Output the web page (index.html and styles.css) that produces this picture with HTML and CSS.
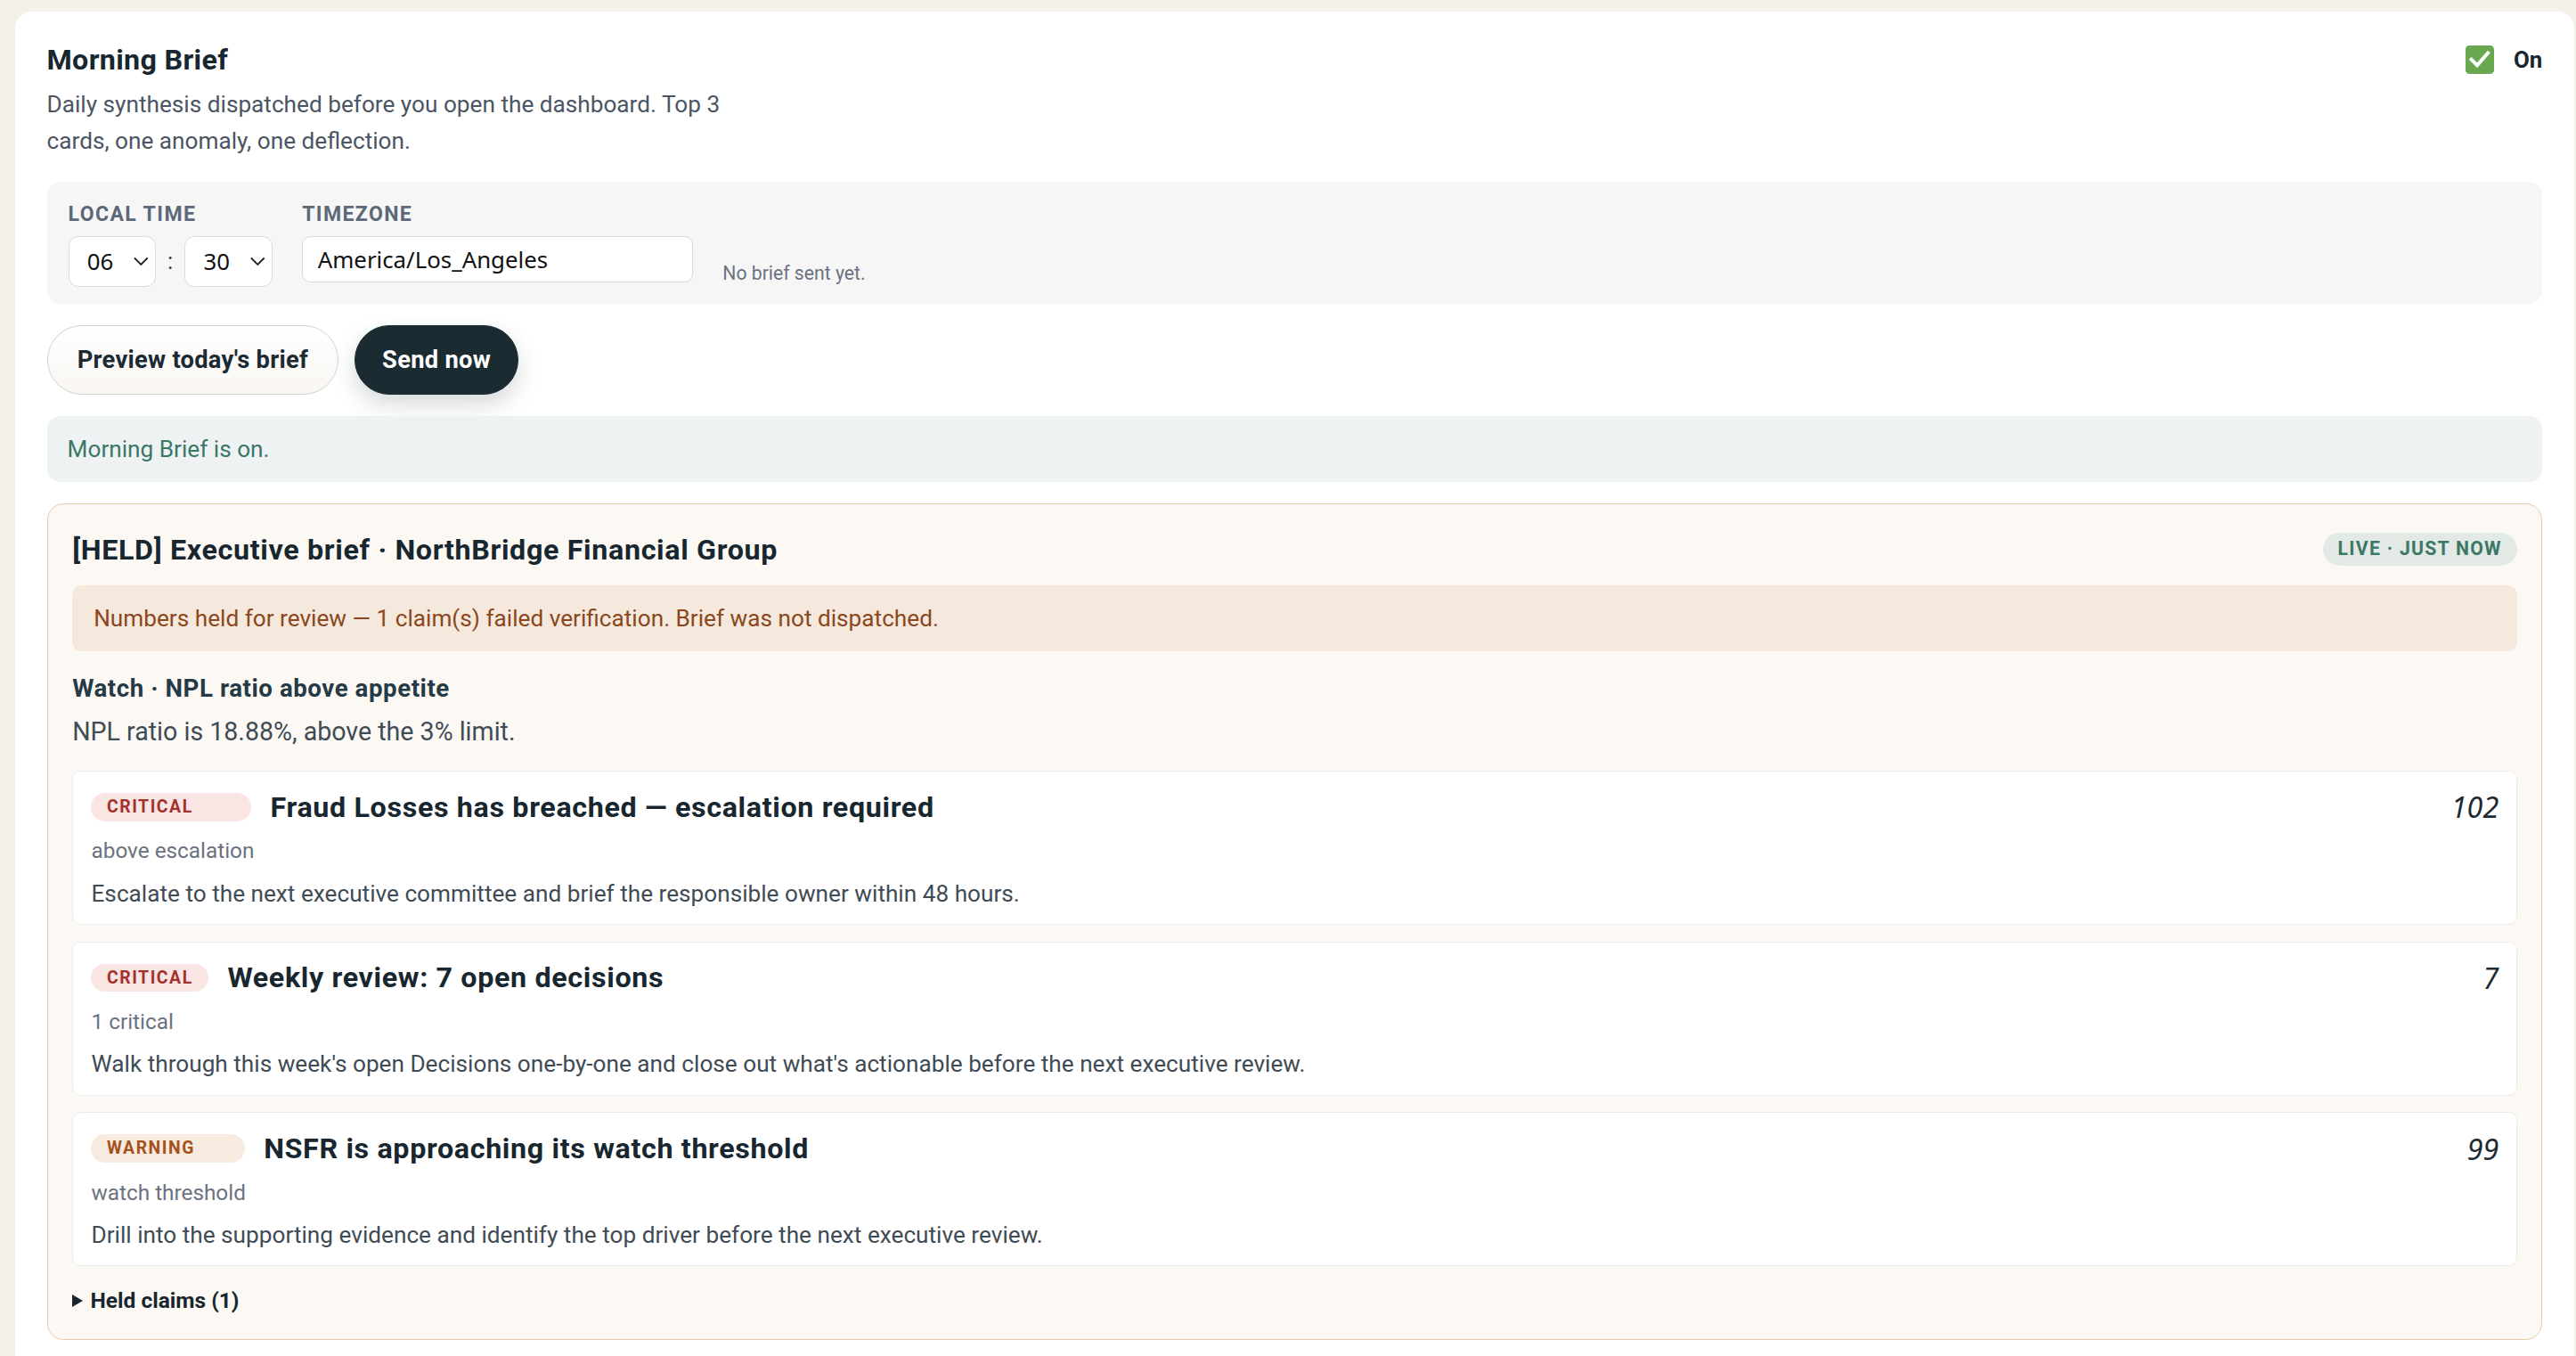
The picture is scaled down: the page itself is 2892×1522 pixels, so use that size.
FILE: index.html
```html
<!DOCTYPE html>
<html lang="en">
  <head>
    <meta charset="utf-8">
    <title>Morning Brief</title>
    <link rel="stylesheet" href="styles.css">
  </head>
  <body>
    <div class="page">
      <section class="brief-card">
        <div class="brief-head">
          <div class="brief-intro">
            <h2>Morning Brief</h2>
            <p>Daily synthesis dispatched before you open the dashboard. Top 3 cards, one anomaly, one deflection.</p>
          </div>
          <label class="toggle">
            <span class="check">
              <svg width="18" height="18" viewBox="0 0 18 18"><path d="M3 9l4.2 4.2L15 4.2" fill="none" stroke="#fff" stroke-width="2.6" stroke-linecap="square"/></svg>
            </span>
            On
          </label>
        </div>

        <div class="schedule">
          <div class="field">
            <span class="field-label">Local time</span>
            <div class="time-row">
              <span class="select-wrap">
                <select><option>06</option></select>
                <svg class="chev" width="9" height="6" viewBox="0 0 9 6"><path d="M.5.8L4.5 4.8 8.5.8" fill="none" stroke="#222" stroke-width="1"/></svg>
              </span>
              <span class="colon">:</span>
              <span class="select-wrap">
                <select><option>30</option></select>
                <svg class="chev" width="9" height="6" viewBox="0 0 9 6"><path d="M.5.8L4.5 4.8 8.5.8" fill="none" stroke="#222" stroke-width="1"/></svg>
              </span>
            </div>
          </div>
          <div class="field">
            <span class="field-label">Timezone</span>
            <input type="text" class="tz-input" value="America/Los_Angeles">
          </div>
          <span class="last-sent">No brief sent yet.</span>
        </div>

        <div class="actions">
          <button class="btn btn-ghost">Preview today's brief</button>
          <button class="btn btn-dark">Send now</button>
        </div>

        <div class="status">Morning Brief is on.</div>

        <div class="held">
          <div class="held-head">
            <h3>[HELD] Executive brief · NorthBridge Financial Group</h3>
            <span class="live">Live · just now</span>
          </div>
          <div class="held-note">Numbers held for review — 1 claim(s) failed verification. Brief was not dispatched.</div>

          <h4 class="watch-title">Watch · NPL ratio above appetite</h4>
          <p class="watch-text">NPL ratio is 18.88%, above the 3% limit.</p>

          <div class="items">
            <article class="item">
              <div class="item-head">
                <span class="badge critical badge-lg">Critical</span>
                <h5>Fraud Losses has breached — escalation required</h5>
                <span class="score">102</span>
              </div>
              <div class="item-sub">above escalation</div>
              <p class="item-text">Escalate to the next executive committee and brief the responsible owner within 48 hours.</p>
            </article>
            <article class="item">
              <div class="item-head">
                <span class="badge critical">Critical</span>
                <h5>Weekly review: 7 open decisions</h5>
                <span class="score">7</span>
              </div>
              <div class="item-sub">1 critical</div>
              <p class="item-text">Walk through this week's open Decisions one-by-one and close out what's actionable before the next executive review.</p>
            </article>
            <article class="item">
              <div class="item-head">
                <span class="badge warning badge-md">Warning</span>
                <h5>NSFR is approaching its watch threshold</h5>
                <span class="score">99</span>
              </div>
              <div class="item-sub">watch threshold</div>
              <p class="item-text">Drill into the supporting evidence and identify the top driver before the next executive review.</p>
            </article>
          </div>

          <details class="claims">
            <summary>Held claims (1)</summary>
          </details>
        </div>
      </section>
    </div>
  </body>
</html>
```

FILE: styles.css
```css
html {
  zoom: 1.8444;
}

body {
  margin: 0;
  background: #f4f0ea;
  font-family: Roboto, "Noto Sans", sans-serif;
  color: #18272f;
}

.page {
  padding: 7px 1px 0 9px;
}

.brief-card {
  background: #fff;
  border-radius: 10px 10px 0 0;
  padding: 18.5px 19.5px 24px;
  display: flex;
  flex-direction: column;
  gap: 13px;
}

/* header */
.brief-head {
  display: flex;
  justify-content: space-between;
  align-items: flex-start;
}
.brief-intro h2 {
  margin: 0;
  font-size: 17.5px;
  line-height: 22px;
  font-weight: 700;
  letter-spacing: 0.01em;
}
.brief-intro p {
  margin: 5px 0 0;
  max-width: 440px;
  font-size: 14.2px;
  line-height: 22.5px;
  color: #4b5563;
}
.toggle {
  display: flex;
  align-items: center;
  gap: 12px;
  height: 22px;
  font-size: 14px;
  font-weight: 700;
}
.check {
  width: 17.5px;
  height: 17.5px;
  border-radius: 2.5px;
  background: #6aa84f;
  display: grid;
  place-items: center;
}
.check svg {
  width: 15px;
  height: 15px;
}

/* schedule panel */
.schedule {
  display: flex;
  align-items: flex-start;
  gap: 18px;
  background: #f6f6f7;
  border-radius: 8px;
  padding: 12px 13px 10.5px;
}
.field {
  display: flex;
  flex-direction: column;
}
.field-label {
  font-size: 12.5px;
  line-height: 16px;
  font-weight: 700;
  letter-spacing: 0.06em;
  text-transform: uppercase;
  color: #5d6878;
  margin-bottom: 5px;
}
.time-row {
  display: flex;
  align-items: center;
  gap: 7px;
}
.colon {
  font-size: 14px;
  color: #333;
}
.select-wrap {
  position: relative;
  display: block;
}
.select-wrap select {
  appearance: none;
  display: block;
  width: 53.5px;
  height: 31px;
  border: 1px solid #dcdcdc;
  border-radius: 6px;
  background: #fff;
  padding: 0 0 0 11px;
  font-family: "Noto Sans", sans-serif;
  font-size: 14px;
  color: #111;
}
.chev {
  position: absolute;
  right: 4.5px;
  top: 12.5px;
}
.tz-input {
  box-sizing: border-box;
  width: 238px;
  height: 28.5px;
  border: 1px solid #d9d9d9;
  border-radius: 5px;
  padding: 0 9px;
  font-family: "Noto Sans", sans-serif;
  font-size: 14px;
  color: #111;
  background: #fff;
}
.last-sent {
  align-self: flex-end;
  font-size: 11.5px;
  line-height: 16px;
  color: #6b7280;
}

/* buttons */
.actions {
  display: flex;
  gap: 9.5px;
}
.btn {
  height: 42px;
  padding: 0 18px;
  border-radius: 999px;
  font-family: Roboto, sans-serif;
  font-size: 14.8px;
  font-weight: 700;
  letter-spacing: 0.01em;
  cursor: pointer;
}
.btn-ghost {
  background: linear-gradient(#fff, #f9f6f2);
  border: 1px solid #d5d2cd;
  color: #1b2a33;
}
.btn-dark {
  padding: 0 16.5px;
  background: #1b2b32;
  border: 1px solid #1b2b32;
  color: #fff;
  box-shadow: 0 6px 14px rgba(27, 43, 50, 0.18);
}

.status {
  background: #eef2f3;
  border-radius: 8px;
  padding: 0 12.5px;
  height: 40.5px;
  line-height: 40.5px;
  font-size: 14.2px;
  color: #3b7767;
}

/* held brief */
.held {
  border: 1px solid #e5caa7;
  border-radius: 10px;
  background: #fcf9f4;
  padding: 16.5px 15px 14.5px;
  display: flex;
  flex-direction: column;
}
.held-head {
  display: flex;
  justify-content: space-between;
  align-items: center;
  min-height: 22px;
}
.held-head h3 {
  margin: 0;
  font-size: 17.5px;
  line-height: 22px;
  font-weight: 700;
  letter-spacing: 0.02em;
}
.live {
  background: #e3e9e5;
  color: #3b7868;
  font-size: 11.5px;
  font-weight: 700;
  letter-spacing: 0.06em;
  text-transform: uppercase;
  height: 20px;
  line-height: 20px;
  padding: 0 9px;
  border-radius: 999px;
}
.held-note {
  margin-top: 10.5px;
  background: #f5e8dc;
  color: #8a4720;
  border-radius: 6px;
  padding: 0 13px;
  height: 40.5px;
  line-height: 40.5px;
  font-size: 14.2px;
}
.watch-title {
  margin: 12px 0 0;
  font-size: 15px;
  line-height: 22px;
  font-weight: 700;
  letter-spacing: 0.02em;
  color: #263a46;
}
.watch-text {
  margin: 4px 0 0;
  font-size: 15.5px;
  line-height: 22px;
  color: #3f4b55;
}

.items {
  margin-top: 12.5px;
  display: flex;
  flex-direction: column;
  gap: 10px;
}
.item {
  background: #fff;
  border: 1px solid #ececec;
  border-radius: 5px;
  padding: 10px 10.5px 8.5px 11px;
}
.item-head {
  display: flex;
  align-items: center;
  gap: 11.5px;
  min-height: 22px;
}
.item-head h5 {
  margin: 0;
  font-size: 17.5px;
  line-height: 22px;
  font-weight: 700;
  letter-spacing: 0.02em;
}
.badge {
  box-sizing: border-box;
  height: 17px;
  line-height: 17px;
  padding: 0 9.5px;
  border-radius: 999px;
  font-size: 10.5px;
  font-weight: 700;
  letter-spacing: 0.08em;
  text-transform: uppercase;
}
.badge.critical {
  background: #f9e5e4;
  color: #a2322b;
}
.badge.warning {
  background: #f7eadf;
  color: #a4521d;
}
.badge-lg {
  min-width: 97.5px;
}
.badge-md {
  min-width: 93.5px;
}
.score {
  margin-left: auto;
  font-family: "Noto Sans", sans-serif;
  font-style: italic;
  font-size: 17.5px;
  color: #1b2a33;
}
.item-sub {
  margin-top: 6px;
  font-size: 13.2px;
  line-height: 18px;
  color: #6b7280;
}
.item-text {
  margin: 7px 0 0;
  font-size: 14.2px;
  line-height: 20px;
  color: #3f4b55;
}

.claims {
  margin-top: 12px;
}
.claims summary {
  list-style: none;
  display: flex;
  align-items: center;
  gap: 4.5px;
  font-size: 13.3px;
  line-height: 18px;
  font-weight: 700;
  cursor: pointer;
}
.claims summary::-webkit-details-marker {
  display: none;
}
.claims summary::before {
  content: "";
  border-left: 6.7px solid #18272f;
  border-top: 4px solid transparent;
  border-bottom: 4px solid transparent;
}
```
